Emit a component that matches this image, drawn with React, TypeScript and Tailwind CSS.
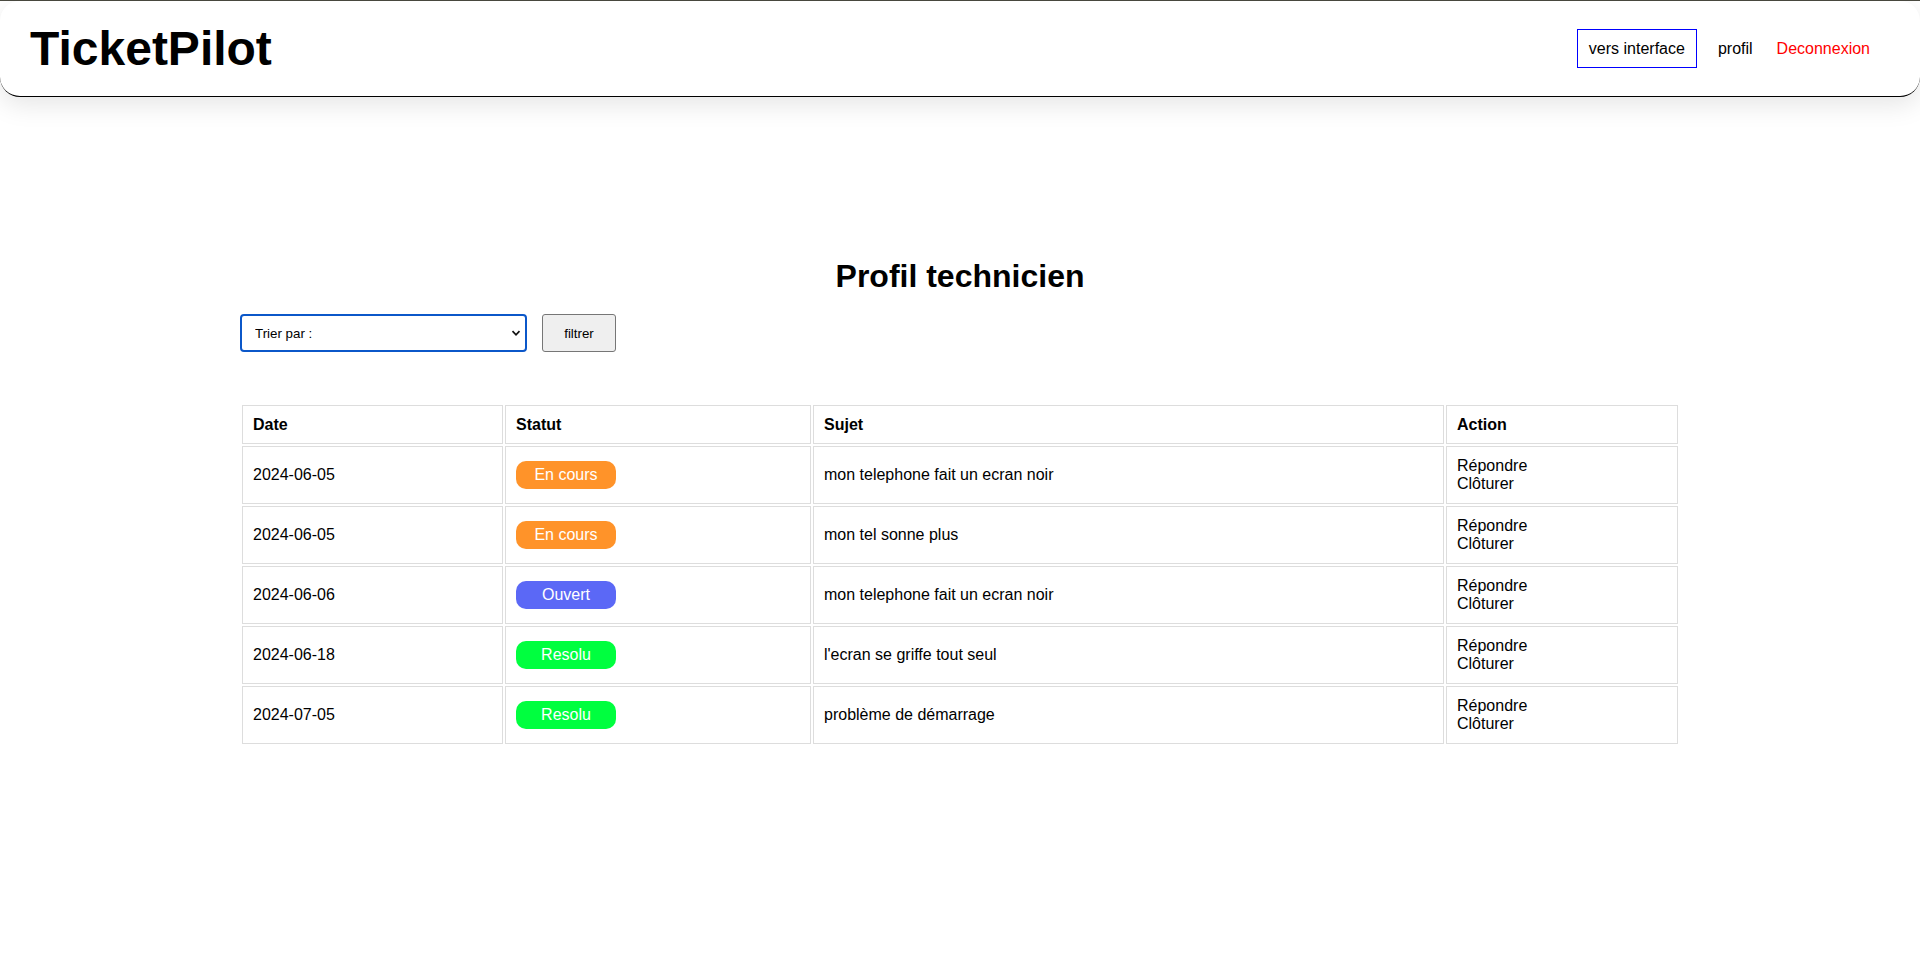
import React from "react";

type Row = { date: string; statut: "En cours" | "Ouvert" | "Resolu"; sujet: string };

const rows: Row[] = [
  { date: "2024-06-05", statut: "En cours", sujet: "mon telephone fait un ecran noir" },
  { date: "2024-06-05", statut: "En cours", sujet: "mon tel sonne plus" },
  { date: "2024-06-06", statut: "Ouvert", sujet: "mon telephone fait un ecran noir" },
  { date: "2024-06-18", statut: "Resolu", sujet: "l'ecran se griffe tout seul" },
  { date: "2024-07-05", statut: "Resolu", sujet: "problème de démarrage" },
];

function Badge({ statut }: { statut: Row["statut"] }) {
  const color =
    statut === "En cours"
      ? "bg-[#ff9329]"
      : statut === "Ouvert"
      ? "bg-[#5b68f6]"
      : "bg-[#00ff3f]";
  return (
    <span
      className={`inline-flex h-[28px] w-[100px] items-center justify-center rounded-[10px] align-middle text-white ${color}`}
    >
      {statut}
    </span>
  );
}

export default function App() {
  return (
    <div
      className="min-h-screen bg-white text-[16px] leading-[normal] text-black"
      style={{ fontFamily: '"Liberation Sans", Arial, Helvetica, sans-serif' }}
    >
      <div className="h-px bg-[#4a4a40]" />
      <header className="flex h-[96px] items-center justify-between rounded-[20px] border-b border-black bg-white pl-[30px] pr-[50px] shadow-[0_8px_26px_rgba(0,0,0,0.1)]">
        <h1 className="text-[48px] font-bold leading-[normal]">TicketPilot</h1>
        <nav className="flex items-center">
          <a className="flex h-[39px] items-center border border-[#0000ff] px-[11px]">vers interface</a>
          <a className="ml-[21px]">profil</a>
          <a className="ml-[24px] text-[#ff0000]">Deconnexion</a>
        </nav>
      </header>

      <main className="mx-auto w-3/4 pt-[161px]">
        <h2 className="text-center text-[32px] font-bold leading-[normal]">Profil technicien</h2>
        <div className="mt-[19px] flex items-center">
          <div className="relative h-[38px] w-[287px]">
            <select className="h-full w-full appearance-none rounded-[4px] border-2 border-[#0b57c9] bg-white pl-[13px] text-[13.33px] outline-none">
              <option>Trier par :</option>
            </select>
            <svg
              className="pointer-events-none absolute right-[6px] top-1/2 -translate-y-1/2"
              width="10"
              height="10"
              viewBox="0 0 10 10"
            >
              <path d="M1.5 3.2 L5 6.8 L8.5 3.2" fill="none" stroke="#111" strokeWidth="1.7" />
            </svg>
          </div>
          <button className="ml-[15px] h-[38px] w-[74px] rounded-[3px] border border-[#767676] bg-[#efefef] text-[13.33px]">
            filtrer
          </button>
        </div>

        <table className="mt-[51px] w-full table-fixed border-separate border-spacing-[2px] leading-[18px]">
          <thead>
            <tr>
              <th className="w-[261px] border border-[#dddddd] p-[10px] text-left font-bold leading-[17px]">Date</th>
              <th className="w-[306px] border border-[#dddddd] p-[10px] text-left font-bold leading-[17px]">Statut</th>
              <th className="w-[631px] border border-[#dddddd] p-[10px] text-left font-bold leading-[17px]">Sujet</th>
              <th className="border border-[#dddddd] p-[10px] text-left font-bold leading-[17px]">Action</th>
            </tr>
          </thead>
          <tbody>
            {rows.map((r, i) => (
              <tr key={i}>
                <td className="border border-[#dddddd] p-[10px] align-middle">{r.date}</td>
                <td className="border border-[#dddddd] p-[10px] align-middle">
                  <Badge statut={r.statut} />
                </td>
                <td className="border border-[#dddddd] p-[10px] align-middle">{r.sujet}</td>
                <td className="border border-[#dddddd] p-[10px] align-middle">
                  <a className="block">Répondre</a>
                  <a className="block">Clôturer</a>
                </td>
              </tr>
            ))}
          </tbody>
        </table>
      </main>
    </div>
  );
}
